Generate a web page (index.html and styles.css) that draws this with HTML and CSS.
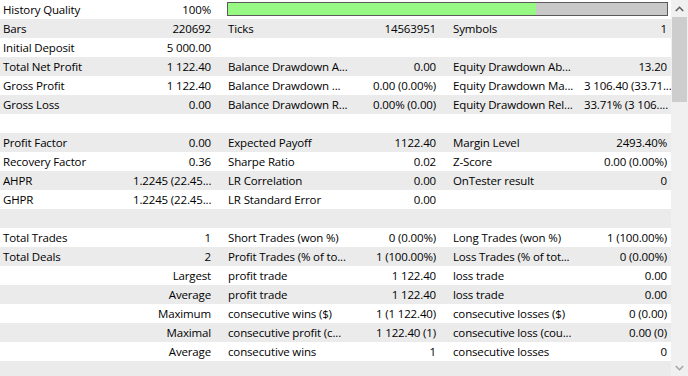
FILE: index.html
```html
<!DOCTYPE html>
<html>
<head>
<meta charset="utf-8">
<link rel="stylesheet" href="styles.css">
</head>
<body>
<div class="window">
  <div class="report">
    <div class="row">
      <div class="lbl">History Quality</div><div class="val">100%</div>
      <div class="barcell"><div class="bar"><div class="fill" style="width:308px"></div></div></div>
    </div>
    <div class="row">
      <div class="lbl">Bars</div><div class="val">220692</div>
      <div class="lbl">Ticks</div><div class="val">14563951</div>
      <div class="lbl">Symbols</div><div class="val v3">1</div>
    </div>
    <div class="row">
      <div class="lbl">Initial Deposit</div><div class="val">5 000.00</div>
      <div class="lbl"></div><div class="val"></div>
      <div class="lbl"></div><div class="val v3"></div>
    </div>
    <div class="row">
      <div class="lbl">Total Net Profit</div><div class="val">1 122.40</div>
      <div class="lbl">Balance Drawdown A...</div><div class="val">0.00</div>
      <div class="lbl">Equity Drawdown Ab...</div><div class="val v3">13.20</div>
    </div>
    <div class="row">
      <div class="lbl">Gross Profit</div><div class="val">1 122.40</div>
      <div class="lbl">Balance Drawdown ...</div><div class="val">0.00 (0.00%)</div>
      <div class="lbl">Equity Drawdown Ma...</div><div class="val v3">3 106.40 (33.71...</div>
    </div>
    <div class="row">
      <div class="lbl">Gross Loss</div><div class="val">0.00</div>
      <div class="lbl">Balance Drawdown R...</div><div class="val">0.00% (0.00)</div>
      <div class="lbl">Equity Drawdown Rel...</div><div class="val v3">33.71% (3 106....</div>
    </div>
    <div class="row"></div>
    <div class="row">
      <div class="lbl">Profit Factor</div><div class="val">0.00</div>
      <div class="lbl">Expected Payoff</div><div class="val">1122.40</div>
      <div class="lbl">Margin Level</div><div class="val v3">2493.40%</div>
    </div>
    <div class="row">
      <div class="lbl">Recovery Factor</div><div class="val">0.36</div>
      <div class="lbl">Sharpe Ratio</div><div class="val">0.02</div>
      <div class="lbl">Z-Score</div><div class="val v3">0.00 (0.00%)</div>
    </div>
    <div class="row">
      <div class="lbl">AHPR</div><div class="val">1.2245 (22.45...</div>
      <div class="lbl">LR Correlation</div><div class="val">0.00</div>
      <div class="lbl">OnTester result</div><div class="val v3">0</div>
    </div>
    <div class="row">
      <div class="lbl">GHPR</div><div class="val">1.2245 (22.45...</div>
      <div class="lbl">LR Standard Error</div><div class="val">0.00</div>
      <div class="lbl"></div><div class="val v3"></div>
    </div>
    <div class="row"></div>
    <div class="row">
      <div class="lbl">Total Trades</div><div class="val">1</div>
      <div class="lbl">Short Trades (won %)</div><div class="val">0 (0.00%)</div>
      <div class="lbl">Long Trades (won %)</div><div class="val v3">1 (100.00%)</div>
    </div>
    <div class="row">
      <div class="lbl">Total Deals</div><div class="val">2</div>
      <div class="lbl">Profit Trades (% of to...</div><div class="val">1 (100.00%)</div>
      <div class="lbl">Loss Trades (% of tot...</div><div class="val v3">0 (0.00%)</div>
    </div>
    <div class="row">
      <div class="lbl"></div><div class="val">Largest</div>
      <div class="lbl">profit trade</div><div class="val">1 122.40</div>
      <div class="lbl">loss trade</div><div class="val v3">0.00</div>
    </div>
    <div class="row">
      <div class="lbl"></div><div class="val">Average</div>
      <div class="lbl">profit trade</div><div class="val">1 122.40</div>
      <div class="lbl">loss trade</div><div class="val v3">0.00</div>
    </div>
    <div class="row">
      <div class="lbl"></div><div class="val">Maximum</div>
      <div class="lbl">consecutive wins ($)</div><div class="val">1 (1 122.40)</div>
      <div class="lbl">consecutive losses ($)</div><div class="val v3">0 (0.00)</div>
    </div>
    <div class="row">
      <div class="lbl"></div><div class="val">Maximal</div>
      <div class="lbl">consecutive profit (c...</div><div class="val">1 122.40 (1)</div>
      <div class="lbl">consecutive loss (cou...</div><div class="val v3">0.00 (0)</div>
    </div>
    <div class="row">
      <div class="lbl"></div><div class="val">Average</div>
      <div class="lbl">consecutive wins</div><div class="val">1</div>
      <div class="lbl">consecutive losses</div><div class="val v3">0</div>
    </div>
    <div class="row"></div>
  </div>
  <div class="scrollbar">
    <div class="sb-btn">
      <svg width="9" height="6" viewBox="0 0 9 6"><polyline points="0.8,5 4.5,1.3 8.2,5" fill="none" stroke="#606060" stroke-width="1.6"/></svg>
    </div>
    <div class="sb-track">
      <div class="sb-thumb"></div>
    </div>
    <div class="sb-btn">
      <svg width="9" height="6" viewBox="0 0 9 6"><polyline points="0.8,1 4.5,4.7 8.2,1" fill="none" stroke="#a6a6a6" stroke-width="1.6"/></svg>
    </div>
  </div>
</div>
</body>
</html>
```

FILE: styles.css
```css
html, body {
  margin: 0;
  padding: 0;
  background: #ffffff;
}

.window {
  display: flex;
  width: 688px;
  height: 376px;
  overflow: hidden;
  font-family: "Open Sans", "Noto Sans", sans-serif;
  font-size: 11.5px;
  letter-spacing: -0.15px;
  color: #000000;
}

.report {
  width: 671px;
  flex: none;
  display: flex;
  flex-direction: column;
}

.row {
  display: grid;
  grid-template-columns: 133px 92px 127px 98px 134px 87px;
  height: 19px;
  flex: none;
  background: #ffffff;
}

.row:nth-child(even) {
  background: #ebebeb;
}

.lbl, .val {
  line-height: 19px;
  white-space: nowrap;
  overflow: hidden;
}

.lbl {
  padding-left: 3px;
}

.val {
  text-align: right;
  padding-right: 14px;
}

.val.v3 {
  padding-right: 4px;
}

.barcell {
  grid-column: 3 / 7;
  padding: 2px 3px 0 2px;
}

.bar {
  height: 12px;
  border: 1px solid #5a5a5a;
  background: #c8c8c8;
  display: flex;
}

.fill {
  height: 100%;
  background: #98f884;
}

.scrollbar {
  width: 17px;
  flex: none;
  background: #f0f0f0;
  display: flex;
  flex-direction: column;
}

.sb-btn {
  height: 17px;
  flex: none;
  display: flex;
  align-items: center;
  justify-content: center;
}

.sb-track {
  flex: 1;
  padding: 0 1px;
}

.sb-thumb {
  height: 85px;
  background: #cdcdcd;
}
```
